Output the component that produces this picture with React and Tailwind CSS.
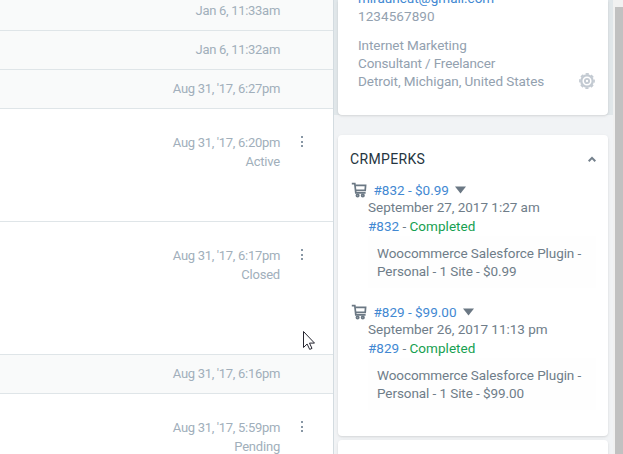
const rowText = "text-[13px] leading-[19px] text-[#a1afbb] text-right w-[280px]";

function Dots() {
  return (
    <div className="ml-[21px] mt-[3px] flex w-[2px] flex-col gap-[2px]">
      <i className="h-[2px] w-[2px] bg-[#8897a5]" />
      <i className="mt-px h-[2px] w-[2px] bg-[#8897a5]" />
      <i className="h-[2px] w-[2px] bg-[#8897a5]" />
    </div>
  );
}

function Note({ time, height }) {
  return (
    <div className={`flex shrink-0 items-center border-b border-[#dfe5e8] bg-[#f9fafa] pb-[2px] ${height}`}>
      <div className={`${rowText} tracking-[-0.3px]`}>{time}</div>
    </div>
  );
}

function Thread({ time, status, height }) {
  return (
    <div className={`flex shrink-0 items-start border-b border-[#dfe5e8] bg-white pt-6 ${height}`}>
      <div className={rowText}>
        <div className="tracking-[-0.3px]">{time}</div>
        <div className="tracking-[-0.2px]">{status}</div>
      </div>
      <Dots />
    </div>
  );
}

function Cart() {
  return (
    <svg className="h-4 w-4 shrink-0" viewBox="0 0 16 16" fill="none" stroke="#6b7884" strokeWidth="1.7">
      <path d="M.8 1.7h3l1 9.2h9.8" />
      <path d="M4.2 3.4h10.4l-.4 4.9H5" />
      <circle cx="6.6" cy="13.5" r="1.2" />
      <circle cx="11.8" cy="13.5" r="1.2" />
    </svg>
  );
}

function Order({ id, price, date }) {
  return (
    <div className="h-[122px] text-[13.5px] text-[#6f7d89]">
      <div className="flex h-[18px] items-center pl-[13px] leading-[18px]">
        <Cart />
        <span className="ml-[6.5px] text-[#4288d2]">#{id} - {price}</span>
        <svg className="ml-[6.5px] h-[8px] w-[11px]" viewBox="0 0 11 8" fill="#6b7884"><path d="M0 0.5h11L5.5 7.5z" /></svg>
      </div>
      <div className="-mt-px pl-[30px] leading-[18px] tracking-[-0.02px]">{date}</div>
      <div className="mt-px pl-[30px] leading-[19px]"><span className="text-[#4288d2]">#{id}</span> - <span className="tracking-[0.04px] text-[#16a050]">Completed</span></div>
      <div className="ml-[30px] mr-[12px] bg-[#fefefe] px-[9px] py-[8px] leading-[18px] tracking-[-0.08px]">
        <div className="whitespace-nowrap">Woocommerce Salesforce Plugin -</div>
        <div>Personal - 1 Site - {price}</div>
      </div>
    </div>
  );
}

export default function App() {
  return (
    <div className="relative flex h-[454px] w-[623px] overflow-hidden bg-white font-['Roboto','Liberation_Sans',sans-serif]">
      <div className="flex w-[334px] shrink-0 flex-col overflow-hidden border-r border-[#d3dbe0]">
        <Note time="Jan 6, 11:33am" height="-mt-[8px] h-[39px]" />
        <Note time="Jan 6, 11:32am" height="h-[39px]" />
        <Note time="Aug 31, '17, 6:27pm" height="h-[39px]" />
        <Thread time="Aug 31, '17, 6:20pm" status="Active" height="h-[113px]" />
        <Thread time="Aug 31, '17, 6:17pm" status="Closed" height="h-[133px]" />
        <Note time="Aug 31, '17, 6:16pm" height="h-[39px]" />
        <Thread time="Aug 31, '17, 5:59pm" status="Pending" height="h-[100px]" />
      </div>
      <div className="flex w-[279px] shrink-0 flex-col overflow-hidden bg-[#f1f3f5]">
        <div className="h-[115px] shrink-0 bg-[#e1e7ea] pl-1 pr-[5px]">
          <div className="flex h-[115px] flex-col justify-end rounded-b bg-white pb-[25px] pl-5 text-[13.5px] leading-[18px] text-[#93a1af] shadow-sm">
            <div className="text-[#4288d2]">mirauncut@gmail.com</div>
            <div className="tracking-[0.08px]">1234567890</div>
            <div className="mt-[11px] tracking-[-0.07px]">Internet Marketing</div>
            <div className="tracking-[-0.14px]">Consultant / Freelancer</div>
            <div className="flex h-[18px] items-center justify-between pr-[13px]">
              <span className="tracking-[-0.05px]">Detroit, Michigan, United States</span>
              <svg className="h-4 w-4" viewBox="0 0 16 16" fill="none" stroke="#c3cad2">
                <circle cx="8" cy="8" r="5.7" strokeWidth="2.3" />
                <circle cx="8" cy="8" r="7.1" strokeWidth="1.6" strokeDasharray="3.2 2.376" strokeDashoffset="1.6" />
                <circle cx="8" cy="8" r="2.1" strokeWidth="1.9" />
              </svg>
            </div>
          </div>
        </div>
        <div className="ml-1 mr-[5px] mt-[20px] h-[301px] shrink-0 rounded bg-white shadow-sm">
          <div className="flex h-[46px] items-center justify-between pl-3 pr-[12px] pt-[2px]">
            <span className="text-[14px] tracking-[0.35px] text-[#253540]">CRMPERKS</span>
            <svg className="h-[6px] w-[8px]" viewBox="0 0 8 6" fill="none" stroke="#74808c" strokeWidth="2"><path d="M.7 5.2L4 1.9l3.3 3.3" /></svg>
          </div>
          <Order id="832" price="$0.99" date="September 27, 2017 1:27 am" />
          <Order id="829" price="$99.00" date="September 26, 2017 11:13 pm" />
        </div>
        <div className="ml-1 mr-[5px] mt-[4px] h-10 shrink-0 rounded bg-white shadow-sm" />
      </div>
      <div className="w-[10px] shrink-0 bg-[#f1f1f1] pl-[2px] pt-[7px]"><div className="h-full bg-[#c1c1c1]" /></div>
      <svg className="absolute left-[303px] top-[331px] h-[19px] w-[12px]" viewBox="0 0 12 19" fill="white" stroke="#252530"><path d="M.5.5v16l3.6-3.5 2.6 5.4 2.3-1-2.5-5.3h5z" /></svg>
    </div>
  );
}
